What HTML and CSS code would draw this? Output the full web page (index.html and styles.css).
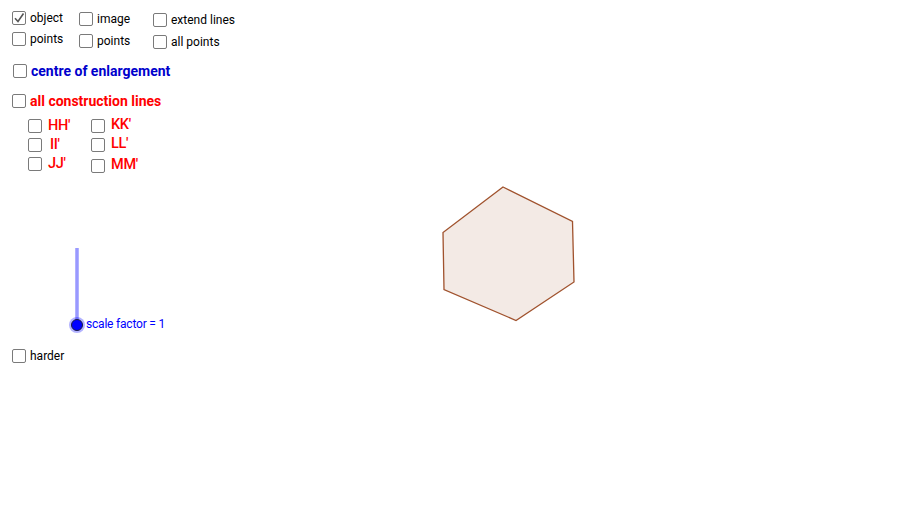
FILE: index.html
```html
<!DOCTYPE html>
<html>
<head>
<meta charset="utf-8">
<link rel="stylesheet" href="styles.css">
</head>
<body>
<div class="canvas">
  <label class="cb" style="left:12px;top:11px"><span class="box checked"><svg viewBox="0 0 14 14" width="14" height="14"><path d="M3 7.2 L6 10.5 L11.5 2.5" fill="none" stroke="#555" stroke-width="1.6"/></svg></span><span class="t">object</span></label>
  <label class="cb" style="left:12px;top:32px"><span class="box"></span><span class="t">points</span></label>
  <label class="cb" style="left:79px;top:12px"><span class="box"></span><span class="t">image</span></label>
  <label class="cb" style="left:79px;top:34px"><span class="box"></span><span class="t">points</span></label>
  <label class="cb" style="left:153px;top:13px"><span class="box"></span><span class="t">extend lines</span></label>
  <label class="cb" style="left:153px;top:35px"><span class="box"></span><span class="t">all points</span></label>

  <label class="cb" style="left:13px;top:64px"><span class="box"></span><span class="t big blue">centre of enlargement</span></label>
  <label class="cb" style="left:12px;top:94px"><span class="box"></span><span class="t big red">all construction lines</span></label>

  <label class="cb" style="left:28px;top:119px"><span class="box"></span><span class="t pair">HH'</span></label>
  <label class="cb" style="left:28px;top:138px"><span class="box"></span><span class="t pair ii">II'</span></label>
  <label class="cb" style="left:28px;top:157px"><span class="box"></span><span class="t pair">JJ'</span></label>
  <label class="cb up" style="left:91px;top:119px"><span class="box"></span><span class="t pair">KK'</span></label>
  <label class="cb up" style="left:91px;top:138px"><span class="box"></span><span class="t pair">LL'</span></label>
  <label class="cb up" style="left:91px;top:159px"><span class="box"></span><span class="t pair">MM'</span></label>

  <label class="cb" style="left:12px;top:349px"><span class="box"></span><span class="t">harder</span></label>

  <svg class="drawing" width="911" height="510" viewBox="0 0 911 510">
    <polygon points="503,187 572.5,221.5 574,282 516,320.5 444,289.5 443,232.5" fill="#f3eae5" stroke="#a0522d" stroke-width="1.3"/>
    <line x1="77" y1="248" x2="77" y2="325" stroke="#9999ff" stroke-width="3.5"/>
    <circle cx="77" cy="325" r="8" fill="#0000ff" fill-opacity="0.3"/>
    <circle cx="77" cy="325" r="5.5" fill="#0000ff" stroke="#1a1a40" stroke-width="1"/>
  </svg>
  <span class="slider-label">scale factor = 1</span>
</div>
</body>
</html>
```
FILE: styles.css
```css
html, body {
  margin: 0;
  padding: 0;
  background: #ffffff;
}
.canvas {
  position: relative;
  width: 911px;
  height: 510px;
  overflow: hidden;
  font-family: Roboto, "Liberation Sans", sans-serif;
}
.drawing {
  position: absolute;
  left: 0;
  top: 0;
}
.cb {
  position: absolute;
  display: flex;
  align-items: center;
  gap: 4px;
  white-space: nowrap;
  z-index: 2;
}
.box {
  box-sizing: border-box;
  width: 14px;
  height: 14px;
  border: 1.4px solid #7a7a7a;
  border-radius: 2px;
  background: #fff;
  display: block;
  position: relative;
}
.box svg {
  position: absolute;
  left: -1px;
  top: -1px;
}
.t {
  font-size: 12px;
  color: #000;
  line-height: 14px;
}
.big {
  font-size: 14px;
  font-weight: bold;
  letter-spacing: 0;
}
.blue { color: #0000cc; }
.red { color: #ff0000; }
.pair {
  color: #ff0000;
  font-size: 14.5px;
  font-weight: 500;
  margin-left: 2px;
  letter-spacing: -0.3px;
}
.pair.ii { margin-left: 4px; }
.up .pair { position: relative; top: -1px; }
.slider-label {
  position: absolute;
  left: 86px;
  top: 317px;
  font-size: 12px;
  line-height: 14px;
  color: #0000ff;
  letter-spacing: -0.2px;
}
```
